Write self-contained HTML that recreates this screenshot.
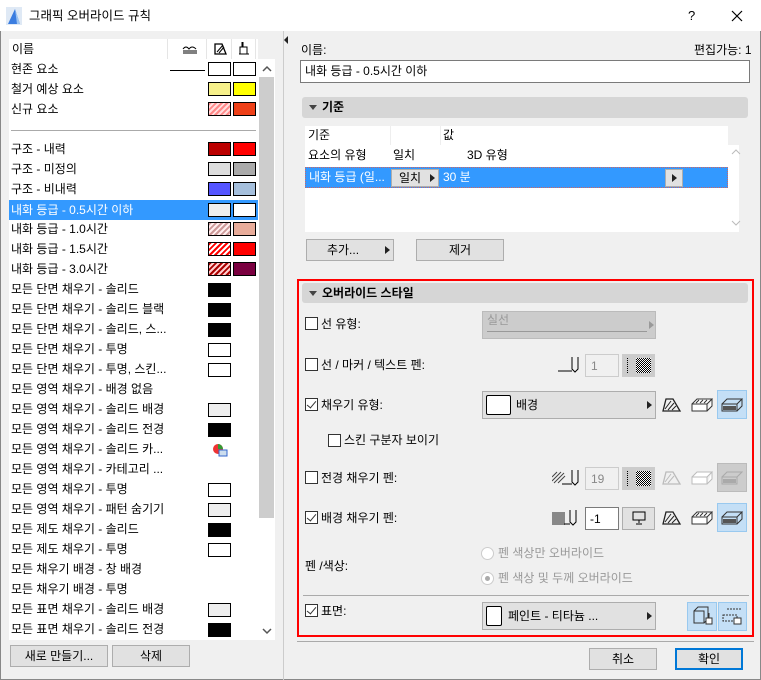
<!DOCTYPE html>
<html><head><meta charset="utf-8"><style>
*{box-sizing:border-box;margin:0;padding:0}
body{width:761px;height:680px;overflow:hidden;background:#f0f0f0;font-family:"Liberation Sans","Noto Sans CJK KR",sans-serif;font-size:12px;color:#000;position:relative}
.a{position:absolute}
.t{position:absolute;white-space:nowrap;line-height:14px}
.sw{position:absolute;width:23px;height:14px;border:1px solid #000}
.btn{position:absolute;background:#e1e1e1;border:1px solid #adadad;text-align:center;line-height:20px}
.cb{position:absolute;width:13px;height:13px;border:1px solid #333;background:#fff}
.cb.c::after{content:"";position:absolute;left:3px;top:0px;width:4px;height:8px;border-right:1.5px solid #333;border-bottom:1.5px solid #333;transform:rotate(40deg)}
.hdr{position:absolute;left:302px;width:446px;height:21px;background:#d6d6d6;border-radius:3px;font-weight:bold;line-height:21px;padding-left:20px}
.hdr::before{content:"";position:absolute;left:7px;top:8px;border-left:4px solid transparent;border-right:4px solid transparent;border-top:5px solid #444}
.dd{position:absolute;background:#e1e1e1;border:1px solid #adadad}
.tri{position:absolute;border-top:4px solid transparent;border-bottom:4px solid transparent;border-left:5px solid #222}
.inp{position:absolute;background:#fff;border:1px solid #7a7a7a}
.sel{position:absolute;background:#c4dff6;border:1px solid #99c9ef}
</style></head><body>
<div class="a" style="left:0;top:0;width:761px;height:31px;background:#fff"></div>
<svg class="a" style="left:6px;top:7px" width="16" height="18"><rect width="16" height="18" fill="#dfe9f5"/><path d="M2 17 L9 2 L14 17 Z" fill="#3b7de0"/><path d="M9 2 L14 17 L11 17 Z" fill="#9cc4f2"/></svg>
<div class="t" style="left:29px;top:9px;font-size:12.5px">그래픽 오버라이드 규칙</div>
<div class="t" style="left:688px;top:9px;font-size:13px">?</div>
<svg class="a" style="left:731px;top:10px" width="12" height="12"><path d="M1 1L11 11M11 1L1 11" stroke="#000" stroke-width="1.2"/></svg>
<div class="a" style="left:0;top:31px;width:761px;height:649px;border:1px solid #888;border-top:none"></div>

<div class="a" style="left:9px;top:39px;width:249px;height:601px;background:#fff"></div>
<div class="a" style="left:258px;top:59px;width:17px;height:581px;background:#fff"></div>
<div class="a" style="left:259px;top:77px;width:15px;height:441px;background:#cdcdcd"></div>
<svg class="a" style="left:261px;top:64px" width="12" height="10"><path d="M2 7L6 3L10 7" stroke="#555" fill="none" stroke-width="1.5"/></svg>
<svg class="a" style="left:261px;top:626px" width="12" height="10"><path d="M2 3L6 7L10 3" stroke="#555" fill="none" stroke-width="1.5"/></svg>
<div class="a" style="left:167px;top:39px;width:1px;height:20px;background:#e5e5e5"></div>
<div class="a" style="left:206px;top:39px;width:1px;height:20px;background:#e5e5e5"></div>
<div class="a" style="left:231px;top:39px;width:1px;height:20px;background:#e5e5e5"></div>
<div class="a" style="left:255px;top:39px;width:1px;height:20px;background:#e5e5e5"></div>
<div class="t" style="left:12px;top:42px">이름</div>
<svg class="a" style="left:182px;top:43px" width="16" height="12"><path d="M1 6Q4 2 7 6Q10 2 14 6" stroke="#000" fill="none"/><path d="M1 8H15M1 10H15" stroke="#000"/></svg>
<svg class="a" style="left:214px;top:42px" width="13" height="13"><path d="M1 12V2H8L12 12Z" fill="none" stroke="#000" stroke-width="1.3"/><path d="M3 10L9 3M5 11L10 5" stroke="#000"/></svg>
<svg class="a" style="left:238px;top:41px" width="12" height="15"><path d="M5 1V6M4 1V6" stroke="#000"/><rect x="2" y="6" width="7" height="7" fill="none" stroke="#000"/><path d="M1 13H11" stroke="#000"/></svg>

<div class="a" style="left:9px;top:200px;width:249px;height:20px;background:#3399ff"></div>
<div class="a" style="left:11px;top:130px;width:245px;height:1px;background:#aaa"></div>
<div class="a" style="left:170px;top:70px;width:35px;height:1px;background:#000"></div>

<div class="t" style="left:11px;top:62px">현존 요소</div>
<div class="t" style="left:11px;top:82px">철거 예상 요소</div>
<div class="t" style="left:11px;top:102px">신규 요소</div>
<div class="t" style="left:11px;top:142px">구조 - 내력</div>
<div class="t" style="left:11px;top:162px">구조 - 미정의</div>
<div class="t" style="left:11px;top:182px">구조 - 비내력</div>
<div class="t" style="left:11px;top:203px;color:#fff">내화 등급 - 0.5시간 이하</div>
<div class="t" style="left:11px;top:222px">내화 등급 - 1.0시간</div>
<div class="t" style="left:11px;top:242px">내화 등급 - 1.5시간</div>
<div class="t" style="left:11px;top:262px">내화 등급 - 3.0시간</div>
<div class="t" style="left:11px;top:282px">모든 단면 채우기 - 솔리드</div>
<div class="t" style="left:11px;top:302px">모든 단면 채우기 - 솔리드 블랙</div>
<div class="t" style="left:11px;top:322px">모든 단면 채우기 - 솔리드, 스...</div>
<div class="t" style="left:11px;top:342px">모든 단면 채우기 - 투명</div>
<div class="t" style="left:11px;top:362px">모든 단면 채우기 - 투명, 스킨...</div>
<div class="t" style="left:11px;top:382px">모든 영역 채우기 - 배경 없음</div>
<div class="t" style="left:11px;top:402px">모든 영역 채우기 - 솔리드 배경</div>
<div class="t" style="left:11px;top:422px">모든 영역 채우기 - 솔리드 전경</div>
<div class="t" style="left:11px;top:442px">모든 영역 채우기 - 솔리드 카...</div>
<div class="t" style="left:11px;top:462px">모든 영역 채우기 - 카테고리 ...</div>
<div class="t" style="left:11px;top:482px">모든 영역 채우기 - 투명</div>
<div class="t" style="left:11px;top:502px">모든 영역 채우기 - 패턴 숨기기</div>
<div class="t" style="left:11px;top:522px">모든 제도 채우기 - 솔리드</div>
<div class="t" style="left:11px;top:542px">모든 제도 채우기 - 투명</div>
<div class="t" style="left:11px;top:562px">모든 채우기 배경 - 창 배경</div>
<div class="t" style="left:11px;top:582px">모든 채우기 배경 - 투명</div>
<div class="t" style="left:11px;top:602px">모든 표면 채우기 - 솔리드 배경</div>
<div class="t" style="left:11px;top:622px">모든 표면 채우기 - 솔리드 전경</div>

<div class="sw" style="left:208px;top:62px;background:#fff"></div><div class="sw" style="left:233px;top:62px;background:#fff"></div>
<div class="sw" style="left:208px;top:82px;background:#f6f08a"></div><div class="sw" style="left:233px;top:82px;background:#ffff00"></div>
<div class="sw" style="left:208px;top:102px;background:repeating-linear-gradient(135deg,#f88 0 2px,#fdd 2px 4px)"></div><div class="sw" style="left:233px;top:102px;background:#ee4018"></div>
<div class="sw" style="left:208px;top:142px;background:#b00"></div><div class="sw" style="left:233px;top:142px;background:#f00"></div>
<div class="sw" style="left:208px;top:162px;background:#ddd"></div><div class="sw" style="left:233px;top:162px;background:#aaa"></div>
<div class="sw" style="left:208px;top:182px;background:#55f"></div><div class="sw" style="left:233px;top:182px;background:#a5bfdc"></div>
<div class="sw" style="left:208px;top:203px;background:#eee"></div><div class="sw" style="left:233px;top:203px;background:#fff"></div>
<div class="sw" style="left:208px;top:222px;background:repeating-linear-gradient(135deg,#c99 0 2px,#fee 2px 4px)"></div><div class="sw" style="left:233px;top:222px;background:#e8ac9a"></div>
<div class="sw" style="left:208px;top:242px;background:repeating-linear-gradient(135deg,#f00 0 2px,#fff 2px 4px)"></div><div class="sw" style="left:233px;top:242px;background:#f00"></div>
<div class="sw" style="left:208px;top:262px;background:repeating-linear-gradient(135deg,#a00 0 2px,#fcc 2px 4px)"></div><div class="sw" style="left:233px;top:262px;background:#7a0040"></div>
<div class="sw" style="left:208px;top:283px;background:#000"></div>
<div class="sw" style="left:208px;top:303px;background:#000"></div>
<div class="sw" style="left:208px;top:323px;background:#000"></div>
<div class="sw" style="left:208px;top:343px;background:#fff"></div>
<div class="sw" style="left:208px;top:363px;background:#fff"></div>
<div class="sw" style="left:208px;top:403px;background:#eee"></div>
<div class="sw" style="left:208px;top:423px;background:#000"></div>
<svg class="a" style="left:212px;top:443px" width="16" height="14"><circle cx="6" cy="6" r="5" fill="#e33"/><path d="M6 6L6 1A5 5 0 0 1 11 6Z" fill="#393"/><rect x="7" y="7" width="8" height="6" fill="#cde" stroke="#36c"/></svg>
<div class="sw" style="left:208px;top:483px;background:#fff"></div>
<div class="sw" style="left:208px;top:503px;background:#eee"></div>
<div class="sw" style="left:208px;top:523px;background:#000"></div>
<div class="sw" style="left:208px;top:543px;background:#fff"></div>
<div class="sw" style="left:208px;top:603px;background:#eee"></div>
<div class="sw" style="left:208px;top:623px;background:#000"></div>

<div class="btn" style="left:10px;top:645px;width:98px;height:22px">새로 만들기...</div>
<div class="btn" style="left:112px;top:645px;width:78px;height:22px">삭제</div>
<div class="a" style="left:283px;top:31px;width:1px;height:649px;background:#ccc"></div>
<div class="tri" style="left:284px;top:36px;border-left:none;border-right:4px solid #222"></div>

<div class="t" style="left:301px;top:43px">이름:</div>
<div class="t" style="left:694px;top:43px">편집가능: 1</div>
<div class="inp" style="left:300px;top:60px;width:450px;height:23px"></div>
<div class="t" style="left:305px;top:64px">내화 등급 - 0.5시간 이하</div>

<div class="hdr" style="top:97px">기준</div>
<div class="a" style="left:305px;top:126px;width:423px;height:106px;background:#fff"></div>
<div class="a" style="left:728px;top:145px;width:11px;height:87px;background:#fff"></div>
<div class="a" style="left:390px;top:126px;width:1px;height:19px;background:#eee"></div>
<div class="a" style="left:440px;top:126px;width:1px;height:19px;background:#eee"></div>
<div class="t" style="left:308px;top:128px">기준</div>
<div class="t" style="left:443px;top:128px">값</div>
<div class="t" style="left:308px;top:148px">요소의 유형</div>
<div class="t" style="left:393px;top:148px">일치</div>
<div class="t" style="left:467px;top:148px">3D 유형</div>
<div class="a" style="left:305px;top:167px;width:423px;height:21px;background:#3399ff;border:1px dotted #c66"></div>
<div class="t" style="left:309px;top:170px;color:#fff">내화 등급 (일...</div>
<div class="btn" style="left:391px;top:169px;width:48px;height:18px;line-height:16px;text-align:left;padding-left:7px">일치</div>
<div class="tri" style="left:430px;top:174px"></div>
<div class="t" style="left:443px;top:170px;color:#fff">30 분</div>
<div class="btn" style="left:665px;top:169px;width:18px;height:18px"></div>
<div class="tri" style="left:672px;top:174px"></div>
<svg class="a" style="left:731px;top:148px" width="10" height="8"><path d="M1 6L5 2L9 6" stroke="#bbb" fill="none"/></svg>
<svg class="a" style="left:731px;top:219px" width="10" height="8"><path d="M1 2L5 6L9 2" stroke="#bbb" fill="none"/></svg>
<div class="btn" style="left:306px;top:239px;width:88px;height:22px;padding-right:14px">추가...</div>
<div class="tri" style="left:385px;top:246px"></div>
<div class="btn" style="left:416px;top:239px;width:88px;height:22px">제거</div>

<div class="a" style="left:297px;top:279px;width:457px;height:358px;border:2px solid #ff0000"></div>
<div class="hdr" style="top:283px;height:20px;line-height:20px">오버라이드 스타일</div>

<div class="cb" style="left:305px;top:317px"></div><div class="t" style="left:321px;top:317px">선 유형:</div>
<div class="a" style="left:482px;top:311px;width:174px;height:28px;background:#ccc;border:1px solid #bbb"></div>
<div class="t" style="left:487px;top:313px;color:#999">실선</div>
<div class="a" style="left:487px;top:331px;width:160px;height:1px;background:#999"></div>
<div class="tri" style="left:649px;top:321px;border-left-color:#999"></div>

<div class="cb" style="left:305px;top:358px"></div><div class="t" style="left:321px;top:358px">선 / 마커 / 텍스트 펜:</div>
<svg class="a" style="left:558px;top:354px" width="24" height="20"><path d="M0 17H14M14 3V15L17 18L20 15V3" stroke="#000" fill="none"/></svg>
<div class="a" style="left:585px;top:354px;width:34px;height:23px;background:#f0f0f0;border:1px solid #ccc"></div>
<div class="t" style="left:591px;top:359px;color:#888">1</div>
<div class="a" style="left:622px;top:354px;width:33px;height:23px;background:#ccc"></div>
<div class="a" style="left:627px;top:358px;width:1px;height:15px;border-left:1px dotted #000"></div>
<div class="a" style="left:636px;top:358px;width:15px;height:15px;background:repeating-conic-gradient(#000 0 25%,#fff 0 50%) 0 0/2px 2px"></div>

<div class="cb c" style="left:305px;top:398px"></div><div class="t" style="left:321px;top:398px">채우기 유형:</div>
<div class="dd" style="left:482px;top:391px;width:174px;height:28px"></div>
<div class="a" style="left:486px;top:395px;width:25px;height:20px;background:#fff;border:1px solid #000;border-radius:2px"></div>
<div class="t" style="left:516px;top:398px">배경</div>
<div class="tri" style="left:647px;top:401px"></div>

<svg class="a" style="left:662px;top:398px" width="20" height="14"><path d="M1 13L4 1H11L18 13Z" fill="none" stroke="#222" stroke-width="1.3"/><path d="M3 11L9 3M6 12L12 5M10 12L14 8" stroke="#222"/></svg>
<svg class="a" style="left:691px;top:398px" width="22" height="14"><path d="M1 6H16V13H1Z M1 6L6 1H21L16 6M16 13L21 8V1" fill="#fff" stroke="#333"/><path d="M5 5L8 2M9 5L12 2M13 5L16 2" stroke="#333"/></svg>
<div class="sel" style="left:717px;top:390px;width:30px;height:29px"></div>
<svg class="a" style="left:721px;top:398px" width="22" height="14"><path d="M1 6H16V13H1Z M1 6L6 1H21L16 6M16 13L21 8V1" fill="none" stroke="#333"/><rect x="2" y="8" width="13" height="4" fill="#555"/></svg>

<div class="cb" style="left:328px;top:434px"></div><div class="t" style="left:344px;top:433px">스킨 구분자 보이기</div>

<div class="cb" style="left:305px;top:471px"></div><div class="t" style="left:321px;top:471px">전경 채우기 펜:</div>
<svg class="a" style="left:552px;top:467px" width="30" height="20"><path d="M0 10L5 5M0 14L9 5M2 16L12 6M6 16L13 9" stroke="#444"/><path d="M10 17H20M20 3V15L23 18L26 15V3" stroke="#000" fill="none"/></svg>
<div class="a" style="left:585px;top:467px;width:34px;height:23px;background:#f0f0f0;border:1px solid #ccc"></div>
<div class="t" style="left:591px;top:472px;color:#888">19</div>
<div class="a" style="left:622px;top:467px;width:33px;height:23px;background:#ccc"></div>
<div class="a" style="left:627px;top:471px;width:1px;height:15px;border-left:1px dotted #000"></div>
<div class="a" style="left:636px;top:471px;width:15px;height:15px;background:repeating-conic-gradient(#000 0 25%,#fff 0 50%) 0 0/2px 2px"></div>
<svg class="a" style="left:662px;top:471px" width="20" height="14"><path d="M1 13L4 1H11L18 13Z" fill="none" stroke="#bbb" stroke-width="1.3"/><path d="M3 11L9 3M6 12L12 5" stroke="#bbb"/></svg>
<svg class="a" style="left:691px;top:471px" width="22" height="14"><path d="M1 6H16V13H1Z M1 6L6 1H21L16 6M16 13L21 8V1" fill="#fff" stroke="#bbb"/></svg>
<div class="a" style="left:717px;top:463px;width:30px;height:29px;background:#ccc;border:1px solid #bbb"></div>
<svg class="a" style="left:721px;top:471px" width="22" height="14"><path d="M1 6H16V13H1Z M1 6L6 1H21L16 6" fill="none" stroke="#aaa"/><rect x="2" y="8" width="13" height="4" fill="#aaa"/></svg>

<div class="cb c" style="left:305px;top:511px"></div><div class="t" style="left:321px;top:511px">배경 채우기 펜:</div>
<div class="a" style="left:552px;top:512px;width:13px;height:13px;background:#888"></div>
<svg class="a" style="left:562px;top:507px" width="20" height="20"><path d="M2 17H8M8 3V15L11 18L14 15V3" stroke="#000" fill="none"/></svg>
<div class="inp" style="left:585px;top:507px;width:34px;height:23px"></div>
<div class="t" style="left:590px;top:512px">-1</div>
<div class="btn" style="left:622px;top:507px;width:33px;height:23px"></div>
<svg class="a" style="left:632px;top:511px" width="14" height="14"><rect x="1" y="1" width="12" height="8" fill="none" stroke="#000"/><path d="M7 9V12M4 13H10" stroke="#000"/></svg>
<svg class="a" style="left:662px;top:511px" width="20" height="14"><path d="M1 13L4 1H11L18 13Z" fill="none" stroke="#222" stroke-width="1.3"/><path d="M3 11L9 3M6 12L12 5M10 12L14 8" stroke="#222"/></svg>
<svg class="a" style="left:691px;top:511px" width="22" height="14"><path d="M1 6H16V13H1Z M1 6L6 1H21L16 6M16 13L21 8V1" fill="#fff" stroke="#333"/><path d="M5 5L8 2M9 5L12 2M13 5L16 2" stroke="#333"/></svg>
<div class="sel" style="left:717px;top:503px;width:30px;height:29px"></div>
<svg class="a" style="left:721px;top:511px" width="22" height="14"><path d="M1 6H16V13H1Z M1 6L6 1H21L16 6M16 13L21 8V1" fill="none" stroke="#333"/><rect x="2" y="8" width="13" height="4" fill="#555"/></svg>

<div class="t" style="left:305px;top:559px">펜 /색상:</div>
<div class="a" style="left:481px;top:547px;width:13px;height:13px;border-radius:50%;border:1px solid #ccc;background:#fff"></div>
<div class="t" style="left:498px;top:546px;color:#999">펜 색상만 오버라이드</div>
<div class="a" style="left:481px;top:572px;width:13px;height:13px;border-radius:50%;border:1px solid #ccc;background:#fff"></div>
<div class="a" style="left:485px;top:576px;width:5px;height:5px;border-radius:50%;background:#aaa"></div>
<div class="t" style="left:498px;top:571px;color:#999">펜 색상 및 두께 오버라이드</div>
<div class="a" style="left:303px;top:595px;width:446px;height:1px;background:#aaa"></div>

<div class="cb c" style="left:305px;top:604px"></div><div class="t" style="left:321px;top:604px">표면:</div>
<div class="dd" style="left:482px;top:602px;width:174px;height:28px"></div>
<div class="a" style="left:486px;top:606px;width:16px;height:20px;background:#fff;border:1px solid #000;border-radius:2px"></div>
<div class="t" style="left:508px;top:609px">페인트 - 티타늄 ...</div>
<div class="tri" style="left:647px;top:612px"></div>
<div class="sel" style="left:687px;top:602px;width:30px;height:29px"></div>
<svg class="a" style="left:692px;top:605px" width="22" height="22"><path d="M2 6H12V18H2Z M2 6L6 2H16V14L12 18" fill="none" stroke="#333"/><rect x="14" y="13" width="6" height="6" fill="#fff" stroke="#333"/><path d="M17 8V13" stroke="#333"/></svg>
<div class="sel" style="left:718px;top:602px;width:29px;height:29px"></div>
<svg class="a" style="left:722px;top:605px" width="22" height="22"><path d="M1 10H15V16H1Z M5 4H20" fill="none" stroke="#333" stroke-dasharray="2 1"/><rect x="12" y="13" width="7" height="6" fill="#fff" stroke="#333"/></svg>

<div class="a" style="left:297px;top:641px;width:457px;height:1px;background:#aaa"></div>
<div class="btn" style="left:589px;top:648px;width:68px;height:22px">취소</div>
<div class="btn" style="left:675px;top:648px;width:68px;height:22px;border:2px solid #0078d7;line-height:18px">확인</div>
</body></html>
